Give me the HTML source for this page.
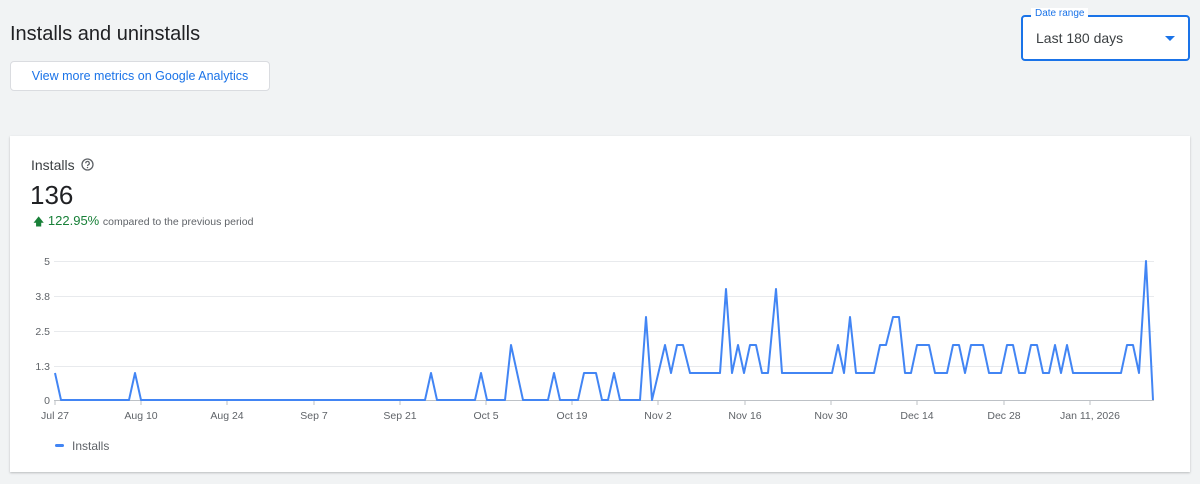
<!DOCTYPE html>
<html><head><meta charset="utf-8"><style>
body{margin:0;width:1200px;height:484px;background:#f1f3f4;font-family:"Liberation Sans",Arial,sans-serif;position:relative;overflow:hidden}
.t{position:absolute;left:10px;top:23px;font-size:20px;color:#202124}
.btn{position:absolute;left:10px;top:61px;width:258px;height:28px;background:#fff;border:1px solid #dadce0;border-radius:4px;color:#1a73e8;font-size:12.5px;text-align:center;line-height:28px}
.dr{position:absolute;left:1021px;top:15px;width:165px;height:42px;border:2px solid #1a73e8;border-radius:4px;background:#fff}
.dr .lb{position:absolute;left:8px;top:-9px;background:#fff;padding:0 4px;font-size:10px;color:#1a73e8}
.dr .v{position:absolute;left:13px;top:13px;font-size:14px;color:#3c4043}
.dr .a{position:absolute;right:13px;top:19px;width:0;height:0;border-left:5px solid transparent;border-right:5px solid transparent;border-top:5px solid #1a73e8}
.card{position:absolute;left:10px;top:136px;width:1180px;height:336px;background:#fff;box-shadow:0 1px 2px rgba(60,64,67,.3)}
</style></head><body>
<div class="t">Installs and uninstalls</div>
<div class="btn">View more metrics on Google Analytics</div>
<div class="dr"><span class="lb">Date range</span><span class="v">Last 180 days</span><span class="a"></span></div>
<div class="card"></div>
<div style="position:absolute;left:31px;top:157px;font-size:14px;color:#3c4043">Installs</div>
<svg style="position:absolute;left:81px;top:158px" width="13" height="13" viewBox="0 0 13 13"><circle cx="6.5" cy="6.5" r="5.5" fill="none" stroke="#5f6368" stroke-width="1.3"/><path d="M4.7 5.2a1.8 1.8 0 1 1 2.6 1.6c-.6.3-.8.6-.8 1.2" fill="none" stroke="#5f6368" stroke-width="1.2"/><circle cx="6.5" cy="9.6" r=".7" fill="#5f6368"/></svg>
<div style="position:absolute;left:30px;top:180px;font-size:26px;color:#202124">136</div>
<div style="position:absolute;left:33px;top:213px;font-size:13px;color:#188038"><span style="font-size:11px">&#129093;</span> 122.95% <span style="font-size:10.5px;color:#5f6368">compared to the previous period</span></div>
<svg style="position:absolute;left:0;top:0" width="1200" height="484">
<g stroke="#e8eaed" stroke-width="1"><line x1="54" x2="1154" y1="261.5" y2="261.5"/><line x1="54" x2="1154" y1="296.5" y2="296.5"/><line x1="54" x2="1154" y1="331.5" y2="331.5"/><line x1="54" x2="1154" y1="366.5" y2="366.5"/></g>
<line x1="54" x2="1154" y1="400.5" y2="400.5" stroke="#bdc1c6"/>
<g stroke="#bdc1c6">
<line x1="55" x2="55" y1="400" y2="405"/><line x1="141" x2="141" y1="400" y2="405"/><line x1="227" x2="227" y1="400" y2="405"/><line x1="314" x2="314" y1="400" y2="405"/><line x1="400" x2="400" y1="400" y2="405"/><line x1="486" x2="486" y1="400" y2="405"/><line x1="572" x2="572" y1="400" y2="405"/><line x1="658" x2="658" y1="400" y2="405"/><line x1="745" x2="745" y1="400" y2="405"/><line x1="831" x2="831" y1="400" y2="405"/><line x1="917" x2="917" y1="400" y2="405"/><line x1="1004" x2="1004" y1="400" y2="405"/><line x1="1090" x2="1090" y1="400" y2="405"/></g>
<g font-size="10.5" fill="#5f6368" text-anchor="end"><text x="50" y="265">5</text><text x="50" y="300">3.8</text><text x="50" y="335">2.5</text><text x="50" y="370">1.3</text><text x="50" y="404">0</text></g>
<g font-size="10.5" fill="#5f6368" text-anchor="middle"><text x="55" y="419">Jul 27</text><text x="141" y="419">Aug 10</text><text x="227" y="419">Aug 24</text><text x="314" y="419">Sep 7</text><text x="400" y="419">Sep 21</text><text x="486" y="419">Oct 5</text><text x="572" y="419">Oct 19</text><text x="658" y="419">Nov 2</text><text x="745" y="419">Nov 16</text><text x="831" y="419">Nov 30</text><text x="917" y="419">Dec 14</text><text x="1004" y="419">Dec 28</text><text x="1090" y="419">Jan 11, 2026</text></g>
<polyline fill="none" stroke="#4285f4" stroke-width="2" stroke-linejoin="round" points="55,373 61,400 129,400 135,373 141,400 425,400 431,373 437,400 475,400 481,373 487,400 505,400 511,345 523,400 548,400 554,373 560,400 578,400 584,373 596,373 602,400 608,400 614,373 620,400 640,400 646,317 652,400 665,345 671,373 677,345 683,345 690,373 720,373 726,289 732,373 738,345 744,373 750,345 756,345 762,373 768,373 776,289 782,373 832,373 838,345 844,373 850,317 856,373 874,373 880,345 886,345 893,317 899,317 905,373 911,373 917,345 929,345 935,373 947,373 953,345 959,345 965,373 971,345 983,345 989,373 1001,373 1007,345 1013,345 1019,373 1025,373 1031,345 1037,345 1043,373 1049,373 1055,345 1061,373 1067,345 1073,373 1121,373 1127,345 1133,345 1139,373 1146,261 1153,400"/>
<rect x="55" y="444" width="9" height="3" rx="1.5" fill="#4285f4"/>
<text x="72" y="450" font-size="12" fill="#5f6368">Installs</text>
</svg>
</body></html>
